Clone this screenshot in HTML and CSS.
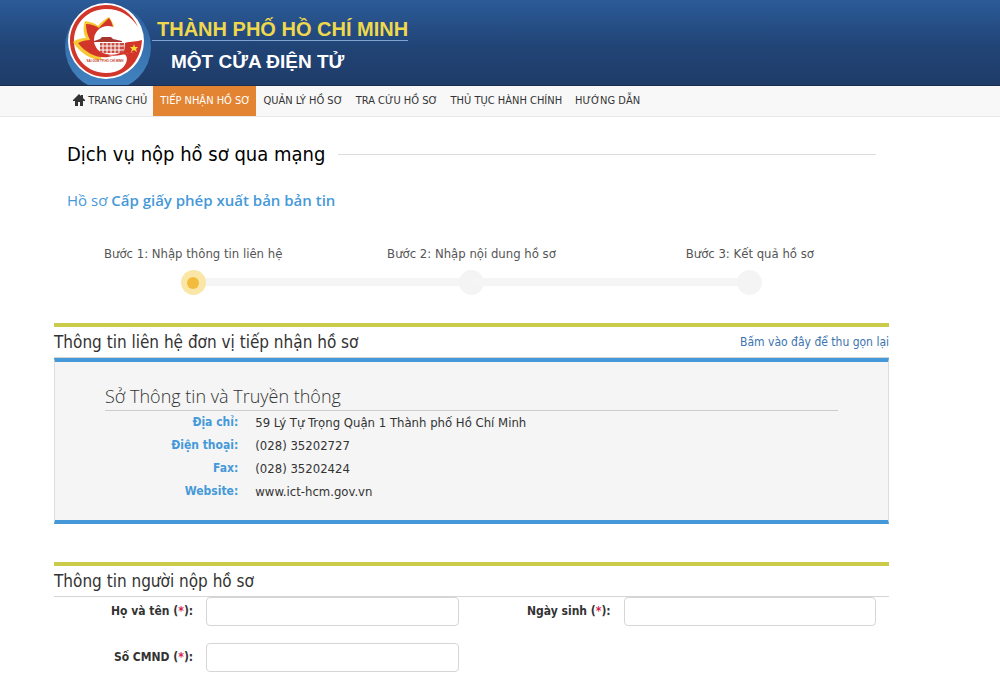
FILE: index.html
```html
<!DOCTYPE html>
<html lang="vi">
<head>
    <meta charset="UTF-8">
    <meta name="viewport" content="width=device-width, initial-scale=1.0">
    <title>Một cửa điện tử</title>
    <link rel="stylesheet" href="styles.css">
</head>
<body>
    <header class="header">
        <svg class="logo" viewBox="0 0 88 86" aria-hidden="true">
            <defs>
                <linearGradient id="glow" x1="0" y1="0" x2="0" y2="1">
                    <stop offset="0" stop-color="#2c5f9c"/>
                    <stop offset="1" stop-color="#4384c2"/>
                </linearGradient>
            </defs>
            <circle cx="44" cy="47" r="43" fill="url(#glow)"/>
            <circle cx="42" cy="41" r="38" fill="#fff"/>
            <!-- red ring, open on the right, closing into the ribbon -->
            <path d="M74 27 C68 13 57 5 42 5 C22 5 6 21 6 41 C6 61 22 77 42 77 C61 77 77 62 78 40 C73 42 67 41 61 43 L60 53 C64 53 67 53 70 52 C66 66 55 73 42 73 C24 73 10 59 10 41 C10 23 24 9 42 9 C57 9 67 16 74 27 Z" fill="#d2352a"/>
            <path d="M70 52 L60 54 C65 56 64 65 54 72 C63 69 70 62 72 52 Z" fill="#d2352a"/>
            <!-- petals -->
            <path d="M9 42 C13 39 17 38 22 38 C19 33 19 27 21 21 C26 22 31 23 34 26 C37 22 41 19 45 17 C48 21 50 25 50 29 L42 30 L31 42 L38 60 C27 60 16 53 9 42 Z" fill="#f6c832"/>
            <path d="M14 43 C18 41 22 40 26 40 C23 34 22 29 22 24 C27 24 32 26 35 28 C38 24 42 21 45 18 C48 22 49 26 49 29 L42 30 L32 42 C34 50 40 54 48 56 C38 60 23 55 14 43 Z" fill="#d2352a"/>
            <circle cx="44" cy="40" r="14" fill="#fff"/>
            <path d="M38 53 C46 56 55 55 61 50 L61 43 L66 42 L66 53 C57 55 48 58 38 53 Z" fill="#d2352a"/>
            <!-- city hall -->
            <path d="M30 41 L36 39 L38 37 H47 L49 39 L58 41 V42 H30 Z" fill="#a8362f"/>
            <path d="M36 43 H60 V53 H36 Z" fill="#c84c40"/>
            <path d="M39 43 V53 M43 43 V53 M47 43 V53 M51 43 V53 M55 43 V53 M36 46 H60 M36 50 H60" stroke="#fff" stroke-width="1"/>
            <path d="M70 44 L71 47 L74 47 L72 49 L73 52 L70 50 L67 52 L68 49 L66 47 L69 47 Z" fill="#f8dc3c"/>
            <text x="41" y="62" class="logo-text">SÀI GÒN TP.HỒ CHÍ MINH</text>
        </svg>
        <div class="brand">
            <div class="brand-city">THÀNH PHỐ HỒ CHÍ MINH</div>
            <div class="brand-name">MỘT CỬA ĐIỆN TỬ</div>
        </div>
    </header>

    <nav class="menu">
        <a href="#">
            <svg class="home" viewBox="0 0 12 12" aria-hidden="true"><path d="M6 0 L8 2 V1 H10 V4 L12 6 V7 H10 V12 H7 V8 H5 V12 H2 V7 H0 V6 Z" fill="#333"/></svg>
            TRANG CHỦ
        </a>
        <a href="#" class="active">TIẾP NHẬN HỒ SƠ</a>
        <a href="#">QUẢN LÝ HỒ SƠ</a>
        <a href="#">TRA CỨU HỒ SƠ</a>
        <a href="#">THỦ TỤC HÀNH CHÍNH</a>
        <a href="#">HƯỚNG DẪN</a>
    </nav>

    <main class="content">
        <h1 class="page-title">Dịch vụ nộp hồ sơ qua mạng</h1>
        <p class="doc-name">Hồ sơ <b>Cấp giấy phép xuất bản bản tin</b></p>

        <ol class="steps">
            <li class="step current">Bước 1: Nhập thông tin liên hệ<span class="dot"></span></li>
            <li class="step">Bước 2: Nhập nội dung hồ sơ<span class="dot"></span></li>
            <li class="step">Bước 3: Kết quả hồ sơ<span class="dot"></span></li>
        </ol>

        <section class="section">
            <div class="section-head">
                <h2>Thông tin liên hệ đơn vị tiếp nhận hồ sơ</h2>
                <a href="#">Bấm vào đây để thu gọn lại</a>
            </div>
            <div class="panel">
                <h3>Sở Thông tin và Truyền thông</h3>
                <dl class="contact">
                    <dt>Địa chỉ:</dt>
                    <dd>59 Lý Tự Trọng Quận 1 Thành phố Hồ Chí Minh</dd>
                    <dt>Điện thoại:</dt>
                    <dd>(028) 35202727</dd>
                    <dt>Fax:</dt>
                    <dd>(028) 35202424</dd>
                    <dt>Website:</dt>
                    <dd>www.ict-hcm.gov.vn</dd>
                </dl>
            </div>
        </section>

        <section class="section">
            <div class="section-head">
                <h2>Thông tin người nộp hồ sơ</h2>
            </div>
            <form class="form">
                <div class="field">
                    <label for="fullname">Họ và tên (<span class="required">*</span>):</label>
                    <input type="text" id="fullname">
                </div>
                <div class="field">
                    <label for="birthday">Ngày sinh (<span class="required">*</span>):</label>
                    <input type="text" id="birthday">
                </div>
                <div class="field">
                    <label for="cmnd">Số CMND (<span class="required">*</span>):</label>
                    <input type="text" id="cmnd">
                </div>
            </form>
        </section>
    </main>
</body>
</html>
```
FILE: styles.css
```css
* {
    box-sizing: border-box;
}
body {
    margin: 0;
    background-color: #fff;
    color: #333;
    font-family: "DejaVu Sans Condensed", Tahoma, sans-serif;
    font-size: 12px;
}
h1, h2, h3, p, ol, dl, dd {
    margin: 0;
    padding: 0;
    font-weight: normal;
}
a {
    text-decoration: none;
}

/* Header */
.header {
    display: flex;
    height: 86px;
    padding-left: 64px;
    background: linear-gradient(#2b5b98, #214476 55%, #1f3c68);
    border-bottom: 1px solid #1b2f52;
    overflow: hidden;
}
.logo {
    flex: none;
    width: 88px;
    height: 86px;
}
.logo-text {
    font: bold 3px "Liberation Sans", Arial, sans-serif;
    fill: #c0392b;
    text-anchor: middle;
}
.brand {
    padding-top: 18px;
    font-family: "Liberation Sans", Arial, sans-serif;
    font-weight: bold;
    line-height: 22px;
}
.brand-city {
    padding-left: 5px;
    color: #f0d84c;
    font-size: 20px;
    border-bottom: 1px solid #7fa3cf;
}
.brand-name {
    padding: 10px 0 0 19px;
    color: #fff;
    font-size: 19px;
}

/* Menu */
.menu {
    display: flex;
    height: 31px;
    padding-left: 66px;
    background-color: #f8f8f8;
    border-bottom: 1px solid #e7e7e7;
}
.menu a {
    padding: 0 6px 0 7px;
    color: #333;
    font-size: 11px;
    line-height: 30px;
    white-space: nowrap;
}
.menu .active {
    background-color: #e38432;
    color: #fff;
}
.home {
    width: 12px;
    height: 12px;
    vertical-align: -2px;
}

/* Content */
.content {
    padding: 23px 111px 0 54px;
}
.page-title {
    display: flex;
    align-items: center;
    gap: 13px;
    padding: 0 13px;
    color: #000;
    font-size: 20px;
    line-height: 28px;
}
.page-title::after {
    content: "";
    flex: 1;
    border-top: 1px solid #ddd;
}
.doc-name {
    padding: 20px 13px 0;
    color: #4599d8;
    font-family: "Open Sans", sans-serif;
    font-size: 15px;
    line-height: 24px;
}
.doc-name b {
    font-weight: 600;
}

/* Wizard steps */
.steps {
    display: flex;
    margin-top: 32px;
    list-style: none;
}
.step {
    flex: 1;
    position: relative;
    color: #555;
    font-size: 13px;
    line-height: 20px;
    text-align: center;
}
.dot {
    display: flex;
    align-items: center;
    justify-content: center;
    position: relative;
    width: 25px;
    height: 25px;
    margin: 6px auto 0;
    border-radius: 50%;
    background-color: #f4f4f4;
}
.current .dot {
    z-index: 1;
    background-color: #fae6a6;
}
.current .dot::after {
    content: "";
    width: 12px;
    height: 12px;
    border-radius: 50%;
    background-color: #f3bb3c;
}
/* bar that joins a step to the one before it */
.step + .step::before {
    content: "";
    position: absolute;
    right: 50%;
    bottom: 9px;
    width: 100%;
    height: 8px;
    background-color: #f5f5f5;
}

/* Sections */
.section {
    margin-top: 38px;
}
.steps + .section {
    margin-top: 28px;
}
.section-head {
    display: flex;
    align-items: center;
    justify-content: space-between;
    border-top: 4px solid #cbcb4a;
    border-bottom: 1px solid #d5d5d5;
}
.section-head h2 {
    font-size: 17px;
    line-height: 30px;
}
.section-head a {
    color: #3b73af;
    font-size: 12px;
}
.panel {
    padding: 20px 50px 17px;
    background-color: #f5f5f5;
    border: 1px solid #ddd;
    border-top: 4px solid #4599d8;
    border-bottom: 4px solid #4599d8;
}
.panel h3 {
    border-bottom: 1px solid #ccc;
    font-family: "Open Sans", sans-serif;
    font-size: 18px;
    font-weight: 300;
    line-height: 28px;
}
.contact {
    display: grid;
    grid-template-columns: 2fr 9fr;
    line-height: 23px;
}
.contact dt {
    color: #4599d8;
    font-weight: bold;
    text-align: right;
}
.contact dd {
    padding-left: 17px;
    font-size: 13px;
}

/* Form */
.form {
    display: grid;
    grid-template-columns: 1fr 1fr;
    row-gap: 17px;
}
.field {
    display: grid;
    grid-template-columns: 1fr 2fr;
}
.field label {
    font-size: 12px;
    font-weight: bold;
    line-height: 29px;
    text-align: right;
}
.field input {
    height: 29px;
    margin: 0 13px;
    padding: 4px 8px;
    border: 1px solid #d5d5d5;
    border-radius: 4px;
    font: inherit;
}
.required {
    color: #d9214e;
}
```
